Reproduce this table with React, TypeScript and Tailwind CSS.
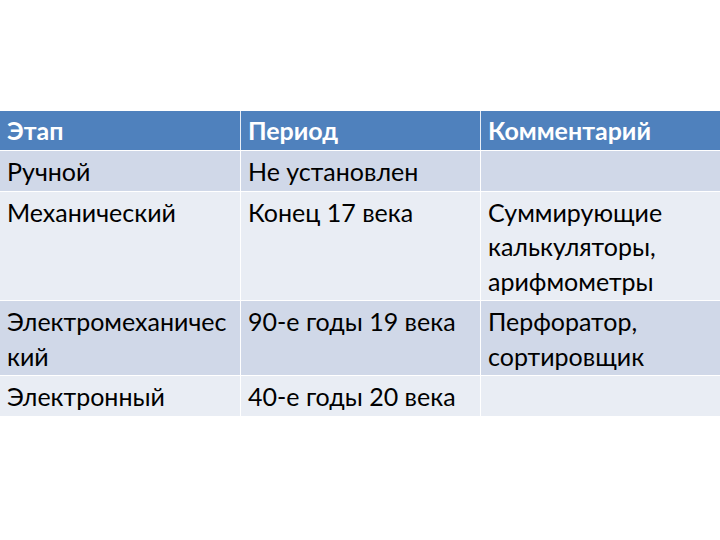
import React from "react";

const rows: { stage: React.ReactNode; period: string; comment: React.ReactNode }[] = [
  { stage: "Ручной", period: "Не установлен", comment: "" },
  {
    stage: "Механический",
    period: "Конец 17 века",
    comment: (
      <>
        Суммирующие
        <br />
        калькуляторы,
        <br />
        арифмометры
      </>
    ),
  },
  {
    stage: (
      <>
        Электромеханичес
        <br />
        кий
      </>
    ),
    period: "90-е годы 19 века",
    comment: (
      <>
        Перфоратор,
        <br />
        сортировщик
      </>
    ),
  },
  { stage: "Электронный", period: "40-е годы 20 века", comment: "" },
];

export default function App() {
  return (
    <div
      className="w-[720px] h-[540px] bg-white pt-[111px]"
      style={{ fontFamily: "Lato, 'Open Sans', sans-serif" }}
    >
      <div className="grid grid-cols-[241px_240px_239px] text-[25px] leading-[34.5px] text-black">
        {/* header */}
        <div className="bg-[#4f81bd] text-white font-bold pl-[7px] pt-[2px] h-[39px] border-r border-[#e8eef7]">
          Этап
        </div>
        <div className="bg-[#4f81bd] text-white font-bold pl-[7px] pt-[2px] h-[39px] border-r border-[#e8eef7]">
          Период
        </div>
        <div className="bg-[#4f81bd] text-white font-bold pl-[7px] pt-[2px] h-[39px]">
          Комментарий
        </div>

        {rows.map((r, i) => {
          const bg = i % 2 === 0 ? "bg-[#d0d8e8]" : "bg-[#e9edf4]";
          return (
            <React.Fragment key={i}>
              <div className={`${bg} pl-[7px] pt-[3px] pb-[2px] border-t border-white border-r`}>{r.stage}</div>
              <div className={`${bg} pl-[7px] pt-[3px] pb-[2px] border-t border-white border-r`}>{r.period}</div>
              <div className={`${bg} pl-[7px] pt-[3px] pb-[2px] border-t border-white`}>{r.comment}</div>
            </React.Fragment>
          );
        })}
      </div>
    </div>
  );
}
